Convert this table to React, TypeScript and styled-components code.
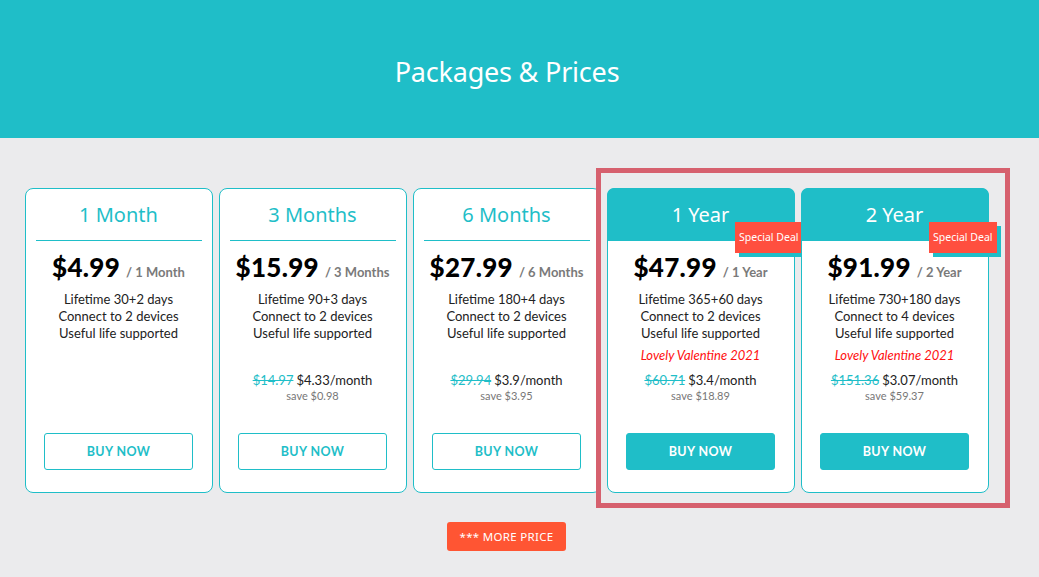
import React from "react";
import styled, { createGlobalStyle } from "styled-components";

const TEAL = "#1fbec8";

const GlobalStyle = createGlobalStyle`
  html, body {
    margin: 0;
    padding: 0;
    background: #ebebed;
  }
  body {
    font-family: "Lato", "Liberation Sans", sans-serif;
    width: 1039px;
    height: 577px;
    overflow: hidden;
  }
  * { box-sizing: border-box; }
`;

const Hero = styled.header`
  background: ${TEAL};
  height: 138px;
  width: 1014px;
  display: flex;
  align-items: center;
  justify-content: center;
  box-shadow: 25px 0 0 ${TEAL};
  > h1 {
    margin: 4px 0 0;
    font-family: "Noto Sans", "Open Sans", sans-serif;
    font-weight: 400;
    font-size: 27px;
    color: #ffffff;
    letter-spacing: -0.2px;
  }
`;

const Main = styled.main`
  width: 1013px;
  display: flex;
  flex-direction: column;
  align-items: center;
  padding-top: 50px;
`;

const Row = styled.div`
  position: relative;
  display: flex;
  gap: 6px;
`;

const Frame = styled.div`
  position: absolute;
  left: 571px;
  top: -20px;
  width: 414px;
  height: 340px;
  border: 5px solid #d6606e;
  pointer-events: none;
`;

const Card = styled.div`
  position: relative;
  width: 188px;
  height: 305px;
  background: #ffffff;
  border: 1px solid ${TEAL};
  border-radius: 8px;
  display: flex;
  flex-direction: column;
  align-items: center;
  text-align: center;
`;

const CardHead = styled.div<{ $hot?: boolean }>`
  align-self: stretch;
  display: flex;
  align-items: center;
  justify-content: center;
  font-family: "Noto Sans", "Open Sans", sans-serif;
  font-size: 20px;
  color: ${(p) => (p.$hot ? "#ffffff" : TEAL)};
  background: ${(p) => (p.$hot ? TEAL : "transparent")};
  border-radius: 7px 7px 0 0;
  margin: ${(p) => (p.$hot ? "-1px -1px 0" : "0 10px")};
  padding-bottom: 1px;
  border-bottom: ${(p) => (p.$hot ? "none" : `1px solid ${TEAL}`)};
  height: ${(p) => (p.$hot ? "53px" : "52px")};
`;

const Badge = styled.span`
  position: absolute;
  top: 33px;
  right: -9px;
  background: #ff4f3f;
  color: #ffffff;
  font-family: "Noto Sans", "Open Sans", sans-serif;
  font-size: 10.5px;
  padding: 8px 4px;
  line-height: 15px;
  box-shadow: 4px 4px 0 ${TEAL};
`;

const Price = styled.div`
  margin-top: 11px;
  line-height: 30px;
  font-weight: 700;
  color: #000000;
  > strong {
    font-size: 26px;
    letter-spacing: 0.3px;
  }
  > small {
    margin-left: 6px;
    font-size: 13px;
    color: #7a7a7a;
  }
`;

const Features = styled.ul`
  list-style: none;
  margin: 4px 0 0;
  padding: 0;
  font-size: 13px;
  line-height: 17px;
  color: #222222;
`;

const Promo = styled.div`
  margin-top: 5px;
  height: 17px;
  line-height: 17px;
  font-size: 13px;
  font-style: italic;
  color: #ff1010;
`;

const Monthly = styled.div`
  margin-top: 8px;
  line-height: 17px;
  font-size: 13px;
  color: #222222;
  > s {
    color: ${TEAL};
    margin-right: 3px;
  }
`;

const Save = styled.div`
  line-height: 14px;
  font-size: 11px;
  color: #777777;
`;

const BuyButton = styled.button<{ $hot?: boolean }>`
  margin-top: auto;
  margin-bottom: 22px;
  width: 149px;
  height: 37px;
  border-radius: 3px;
  border: 1px solid ${TEAL};
  background: ${(p) => (p.$hot ? TEAL : "#ffffff")};
  color: ${(p) => (p.$hot ? "#ffffff" : TEAL)};
  font-family: "Lato", sans-serif;
  font-weight: 700;
  font-size: 12.5px;
  letter-spacing: 0.4px;
  cursor: pointer;
`;

const MoreButton = styled.button`
  margin-top: 29px;
  width: 119px;
  height: 29px;
  border: none;
  border-radius: 3px;
  background: #ff5533;
  color: #ffffff;
  font-family: "Noto Sans", "Open Sans", sans-serif;
  font-size: 11.5px;
  letter-spacing: 0.3px;
  padding: 0;
`;

type Plan = {
  name: string;
  price: string;
  per: string;
  lifetime: string;
  devices: number;
  hot?: boolean;
  promo?: string;
  was?: string;
  monthly?: string;
  save?: string;
};

const plans: Plan[] = [
  { name: "1 Month", price: "$4.99", per: "1 Month", lifetime: "30+2", devices: 2 },
  {
    name: "3 Months", price: "$15.99", per: "3 Months", lifetime: "90+3", devices: 2,
    was: "$14.97", monthly: "$4.33", save: "$0.98",
  },
  {
    name: "6 Months", price: "$27.99", per: "6 Months", lifetime: "180+4", devices: 2,
    was: "$29.94", monthly: "$3.9", save: "$3.95",
  },
  {
    name: "1 Year", price: "$47.99", per: "1 Year", lifetime: "365+60", devices: 2, hot: true,
    promo: "Lovely Valentine 2021", was: "$60.71", monthly: "$3.4", save: "$18.89",
  },
  {
    name: "2 Year", price: "$91.99", per: "2 Year", lifetime: "730+180", devices: 4, hot: true,
    promo: "Lovely Valentine 2021", was: "$151.36", monthly: "$3.07", save: "$59.37",
  },
];

function PlanCard({ plan }: { plan: Plan }) {
  return (
    <Card>
      <CardHead $hot={plan.hot}>{plan.name}</CardHead>
      {plan.hot && <Badge>Special Deal</Badge>}
      <Price>
        <strong>{plan.price}</strong>
        <small>/ {plan.per}</small>
      </Price>
      <Features>
        <li>Lifetime {plan.lifetime} days</li>
        <li>Connect to {plan.devices} devices</li>
        <li>Useful life supported</li>
      </Features>
      {plan.monthly && (
        <>
          <Promo>{plan.promo}</Promo>
          <Monthly>
            <s>{plan.was}</s>
            {plan.monthly}/month
          </Monthly>
          <Save>save {plan.save}</Save>
        </>
      )}
      <BuyButton $hot={plan.hot}>BUY NOW</BuyButton>
    </Card>
  );
}

export default function App() {
  return (
    <>
      <GlobalStyle />
      <Hero>
        <h1>Packages &amp; Prices</h1>
      </Hero>
      <Main>
        <Row>
          {plans.map((p) => (
            <PlanCard key={p.name} plan={p} />
          ))}
          <Frame />
        </Row>
        <MoreButton>*** MORE PRICE</MoreButton>
      </Main>
    </>
  );
}
